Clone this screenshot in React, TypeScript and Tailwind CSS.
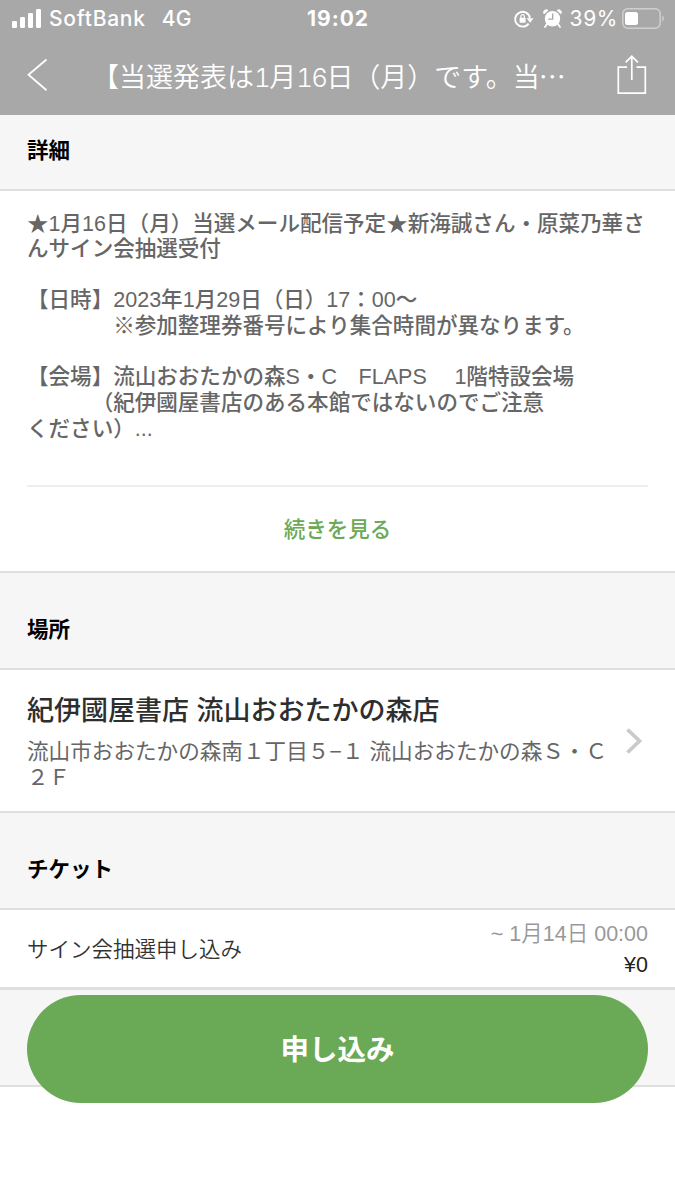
import type { ReactNode } from 'react';

const detailLines = [
  '★1月16日（月）当選メール配信予定★新海誠さん・原菜乃華さ',
  'んサイン会抽選受付',
  '',
  '【日時】2023年1月29日（日）17：00〜',
  '　　　　※参加整理券番号により集合時間が異なります。',
  '',
  '【会場】流山おおたかの森S・C　FLAPS　 1階特設会場',
  '　　　（紀伊國屋書店のある本館ではないのでご注意',
  'ください）...',
];

function StatusBar() {
  return (
    <div className="flex h-[37px] items-center pl-3 pr-[10px] font-['Inter','Noto_Sans_CJK_JP',sans-serif] text-[21px] leading-[37px]">
      <div className="flex flex-1 items-center">
        <svg width="30" height="19" viewBox="0 0 30 19" fill="white" className="mb-px shrink-0">
          <rect x="0" y="12" width="5" height="7" rx="1.3" />
          <rect x="8" y="8" width="5" height="11" rx="1.3" />
          <rect x="16" y="4" width="5" height="15" rx="1.3" />
          <rect x="24" y="0" width="5" height="19" rx="1.3" />
        </svg>
        <span className="ml-[7px] font-medium tracking-[0.75px]">SoftBank</span>
        <span className="ml-[16px] font-medium tracking-[0.3px]">4G</span>
      </div>
      <span className="mr-px font-bold tracking-[1px]">19:02</span>
      <div className="flex flex-1 items-center justify-end">
        <svg width="20" height="18" viewBox="0 0 20 18" fill="none" className="shrink-0">
          <path d="M14.6 13.6A7.4 7.4 0 1 1 15.9 8" stroke="white" strokeWidth="1.9" />
          <path d="M12.6 8.2h7l-3.5 4.6z" fill="white" />
          <rect x="5.6" y="7.8" width="6" height="5" rx="0.7" fill="white" />
          <path d="M6.9 8V6.4a1.7 1.7 0 0 1 3.4 0V8" stroke="white" strokeWidth="1.2" />
        </svg>
        <svg width="19" height="19" viewBox="0 0 19 19" fill="none" className="ml-[9px] shrink-0">
          <path d="M1 5.2A2.8 2.8 0 0 1 5.3 1.4zM18 5.2a2.8 2.8 0 0 0-4.3-3.8z" fill="white" />
          <circle cx="9.5" cy="9.8" r="7.7" fill="white" />
          <path d="m4 15-2 3M15 15l2 3" stroke="white" strokeWidth="1.8" strokeLinecap="round" />
          <path d="M9.7 4.8v5.4H5.8" stroke="#a8a8a8" strokeWidth="1.3" strokeLinecap="round" />
        </svg>
        <span className="ml-[8px] tracking-[0.6px]">39%</span>
        <svg width="43" height="21" viewBox="0 0 43 21" fill="none" className="ml-[4px] shrink-0">
          <rect x="0.8" y="0.8" width="37.4" height="19.4" rx="5" stroke="#cfcfcf" strokeWidth="1.5" />
          <rect x="3" y="4" width="13" height="13" rx="2.5" fill="white" />
          <path d="M40.2 7.5v6c2.2-1 2.2-5 0-6z" fill="#cfcfcf" />
        </svg>
      </div>
    </div>
  );
}

function Digits({ children }: { children: string }) {
  return <span className="font-['Inter',sans-serif] text-[26px] tracking-[-1.7px] tabular-nums">{children}</span>;
}

function Header() {
  return (
    <header className="h-[115px] bg-[#a8a8a8] text-white">
      <StatusBar />
      <div className="flex h-[78px] items-start">
        <svg width="22" height="34" viewBox="0 0 22 34" fill="none" className="ml-[26px] mt-[21px] shrink-0">
          <path d="M20.5 1.5 2.5 16.7l18 15.6" stroke="white" strokeWidth="1.8" />
        </svg>
        <h1 className="ml-[44px] mt-[19px] w-[525px] whitespace-nowrap text-[27px] font-[350] leading-10">
          【当選発表は<Digits>1</Digits>月<Digits>16</Digits>日（月）です。当
          <span className="-ml-px font-['Noto_Sans_CJK_JP',sans-serif]">…</span>
        </h1>
        <svg width="30" height="40" viewBox="0 0 30 40" fill="none" className="mt-[18px] shrink-0">
          <path d="M10 12.2H1.3v26h27v-26H19.5M14.8 25V1.5M8.7 7.3l6.1-6 6.1 6" stroke="white" strokeWidth="1.7" />
        </svg>
      </div>
    </header>
  );
}

function SectionTitle({ children, first = false }: { children?: ReactNode; first?: boolean }) {
  return (
    <h2
      className={`flex items-center border-b-2 border-[#dfdfdf] bg-[#f6f6f6] px-[27px] text-[21.5px] font-bold leading-8 text-black ${
        first ? 'h-[76px] pb-[2px]' : 'h-[97px] pt-[18px]'
      }`}
    >
      {children}
    </h2>
  );
}

export default function App() {
  return (
    <div className="relative h-[1200px] w-[675px] overflow-hidden bg-white font-['Liberation_Sans','Noto_Sans_CJK_JP',sans-serif]">
      <Header />
      <SectionTitle first>詳細</SectionTitle>

      <section className="flex h-[382px] flex-col border-b-2 border-[#dfdfdf] px-[27px] pt-[19.5px]">
        <div className="h-[274.5px] text-[21.55px] font-medium text-[#666] [text-spacing-trim:space-all]">
          {detailLines.map((line, i) => (
            <p key={i} className="h-[25.65px] whitespace-pre leading-[25.65px]">
              {line}
            </p>
          ))}
        </div>
        <div className="h-[2px] shrink-0 bg-[#eee]" />
        <button className="h-[84px] w-full pt-[2px] text-center text-[21.5px] font-medium text-[#6aa956]">続きを見る</button>
      </section>

      <div className="h-[96px]">
        <SectionTitle>場所</SectionTitle>
      </div>

      <section className="flex h-[144px] justify-between border-b-2 border-[#dfdfdf] px-[27px]">
        <div className="pt-[21px]">
          <h3 className="whitespace-nowrap text-[27px] font-medium leading-[42px] text-[#2e2e2e]">紀伊國屋書店 流山おおたかの森店</h3>
          <p className="mt-[7px] whitespace-nowrap text-[21.6px] leading-[25.7px] text-[#666]">
            流山市おおたかの森南１丁目５−１ 流山おおたかの森Ｓ・Ｃ
            <br />
            ２Ｆ
          </p>
        </div>
        <svg width="17" height="26" viewBox="0 0 17 26" fill="none" className="mr-[5px] mt-[59px] shrink-0">
          <path d="m1.5 1.5 12 11.5-12 11.5" stroke="#cacaca" strokeWidth="3.8" />
        </svg>
      </section>

      <SectionTitle>チケット</SectionTitle>

      <section className="flex h-[80px] items-center justify-between border-b-[3px] border-[#dfdfdf] px-[27px] text-[21.5px]">
        <span className="pt-[3px] font-[350] text-[#333]">サイン会抽選申し込み</span>
        <div className="pt-[3px] text-right leading-[31px]">
          <p className="font-[350] text-[#999]">~ 1月14日 00:00</p>
          <p className="text-[#222]">¥0</p>
        </div>
      </section>

      <SectionTitle />

      <button className="absolute left-[27px] top-[995px] h-[108px] w-[621px] rounded-full bg-[#6aa956] pt-[2px] text-[28.5px] font-bold text-white">
        申し込み
      </button>
    </div>
  );
}
